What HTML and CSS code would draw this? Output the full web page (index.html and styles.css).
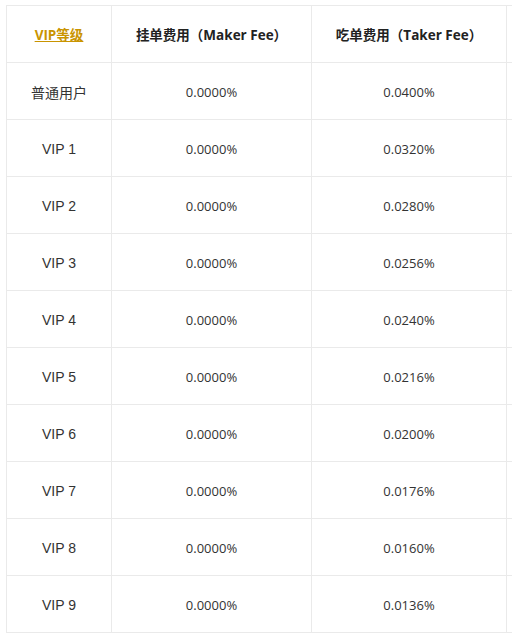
FILE: index.html
```html
<!doctype html>
<html>
<head>
    <meta charset="UTF-8">
    <title>VIP等级费率</title>
    <link rel="stylesheet" href="styles.css">
</head>
<body>
<div class="wrap">
    <table class="fee">
        <thead>
        <tr>
            <th class="c1"><a href="#">VIP等级</a></th>
            <th class="c2">挂单费用（Maker Fee）</th>
            <th class="c3">吃单费用（Taker Fee）</th>
            <th class="c4"></th>
        </tr>
        </thead>
        <tbody>
        <tr><td class="lv">普通用户</td><td>0.0000%</td><td>0.0400%</td><td></td></tr>
        <tr><td class="lv">VIP 1</td><td>0.0000%</td><td>0.0320%</td><td></td></tr>
        <tr><td class="lv">VIP 2</td><td>0.0000%</td><td>0.0280%</td><td></td></tr>
        <tr><td class="lv">VIP 3</td><td>0.0000%</td><td>0.0256%</td><td></td></tr>
        <tr><td class="lv">VIP 4</td><td>0.0000%</td><td>0.0240%</td><td></td></tr>
        <tr><td class="lv">VIP 5</td><td>0.0000%</td><td>0.0216%</td><td></td></tr>
        <tr><td class="lv">VIP 6</td><td>0.0000%</td><td>0.0200%</td><td></td></tr>
        <tr><td class="lv">VIP 7</td><td>0.0000%</td><td>0.0176%</td><td></td></tr>
        <tr><td class="lv">VIP 8</td><td>0.0000%</td><td>0.0160%</td><td></td></tr>
        <tr><td class="lv">VIP 9</td><td>0.0000%</td><td>0.0136%</td><td></td></tr>
        </tbody>
    </table>
</div>
</body>
</html>
```

FILE: styles.css
```css
* {
    margin: 0;
    padding: 0;
}

body {
    background-color: #fff;
    overflow: hidden;
    font-family: "Open Sans", "Noto Sans CJK SC", sans-serif;
    color: #333;
}

.wrap {
    padding: 5px 0 0 6px;
    overflow: hidden;
}

.fee {
    border-collapse: collapse;
    table-layout: fixed;
    width: 601px;
}

.fee th, .fee td {
    height: 54px;
    padding-top: 2px;
    border: 1px solid #eaeaea;
    text-align: center;
    vertical-align: middle;
    font-size: 13px;
}

.fee th {
    height: 56px;
    padding-top: 0;
    font-weight: bold;
    font-size: 13.5px;
    color: #222;
}

.fee .c1 {
    width: 104px;
}

.fee .c2 {
    width: 199px;
}

.fee .c3 {
    width: 194px;
}

.fee .c4 {
    width: 100px;
}

.fee th a {
    color: #c99400;
    text-decoration: underline;
}

.fee td.lv {
    font-family: "Liberation Sans", "Noto Sans CJK SC", sans-serif;
    font-size: 14px;
}
```
